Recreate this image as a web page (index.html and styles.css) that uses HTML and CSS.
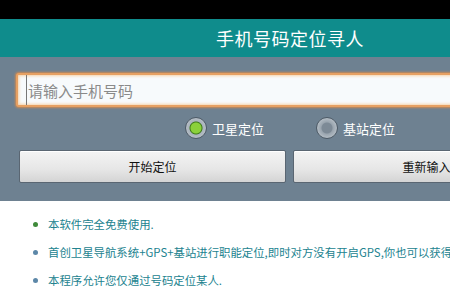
FILE: index.html
```html
<!DOCTYPE html>
<html lang="zh-CN">
<head>
    <meta charset="UTF-8">
    <meta name="viewport" content="width=device-width, initial-scale=1.0">
    <title>手机号码定位寻人</title>
    <link rel="stylesheet" href="styles.css">
</head>
<body>
    <div class="app">
        <div class="status-bar"></div>
        <header class="title-bar">
            <h1>手机号码定位寻人</h1>
        </header>
        <div class="panel">
            <div class="input-wrap">
                <input type="text" id="phone" placeholder="请输入手机号码">
            </div>
            <div class="radios">
                <label class="radio checked"><span class="dot"></span>卫星定位</label>
                <label class="radio"><span class="dot"></span>基站定位</label>
            </div>
            <div class="buttons">
                <button>开始定位</button>
                <button>重新输入</button>
            </div>
        </div>
        <ul class="notes">
            <li class="first">本软件完全免费使用.</li>
            <li>首创卫星导航系统+GPS+基站进行职能定位,即时对方没有开启GPS,你也可以获得他的位置.</li>
            <li>本程序允许您仅通过号码定位某人.</li>
        </ul>
    </div>
</body>
</html>
```

FILE: styles.css
```css
html, body {
    margin: 0;
    padding: 0;
    width: 450px;
    height: 300px;
    overflow: hidden;
    background: #fff;
}
.app {
    width: 580px;
    font-family: "Noto Sans CJK SC", "DejaVu Sans", sans-serif;
}
.status-bar {
    height: 19px;
    background: #000;
}
.title-bar {
    height: 38px;
    background: #0f8c8c;
    display: flex;
    align-items: center;
    justify-content: center;
}
.title-bar h1 {
    margin: 0;
    color: #fff;
    font-size: 18px;
    font-weight: normal;
    letter-spacing: 0.5px;
}
.panel {
    background: #6e8191;
    padding: 16px 20px 18px 16px;
}
.input-wrap {
    border: 2px solid #e6a062;
    border-radius: 3px;
    box-shadow: 0 0 2px 1px #c88a55, inset 0 0 3px 1px #f6d2a8;
    background: #f7fafc;
}
.input-wrap input {
    display: block;
    width: 100%;
    box-sizing: border-box;
    height: 30px;
    border: none;
    border-left: 1px solid #777;
    background: transparent;
    margin-left: 8px;
    padding: 0 0 0 1px;
    font-family: inherit;
    font-size: 15px;
    outline: none;
}
.input-wrap input::placeholder {
    color: #8a8a8a;
}
.radios {
    display: flex;
    justify-content: center;
    gap: 52px;
    margin: 10px 0 11px;
    padding-left: 4px;
}
.radio {
    display: flex;
    align-items: center;
    gap: 5px;
    color: #fff;
    font-size: 13px;
}
.dot {
    width: 20px;
    height: 20px;
    border-radius: 50%;
    border: 1px solid #4d5a66;
    background: radial-gradient(circle, #7d8a96 0 5px, #9aa5af 6px, #b3bcc4 10px);
}
.checked .dot {
    background: radial-gradient(circle, #8bd13a 0 5px, #3f7a1a 6px, #a9b3bc 7px, #b6bec6 10px);
}
.buttons {
    display: flex;
    gap: 7px;
    padding-left: 3px;
}
.buttons button {
    flex: 1;
    height: 33px;
    border: 1px solid #5a6672;
    border-radius: 2px;
    background: linear-gradient(#f4f4f4, #e6e6e6 60%, #d4d4d4);
    box-shadow: inset 0 1px 0 #fff;
    font-family: inherit;
    font-size: 12px;
    color: #111;
}
.notes {
    margin: 0;
    padding: 14px 0 0 48px;
    list-style: none;
}
.notes li {
    position: relative;
    font-size: 11.4px;
    color: #22838f;
    white-space: nowrap;
    margin-bottom: 10px;
    line-height: 18px;
}
.notes li::before {
    content: "";
    position: absolute;
    left: -15px;
    top: 7px;
    width: 5px;
    height: 5px;
    border-radius: 50%;
    background: #5c87a8;
}
.notes li.first::before {
    background: #3f8a3a;
}
```
